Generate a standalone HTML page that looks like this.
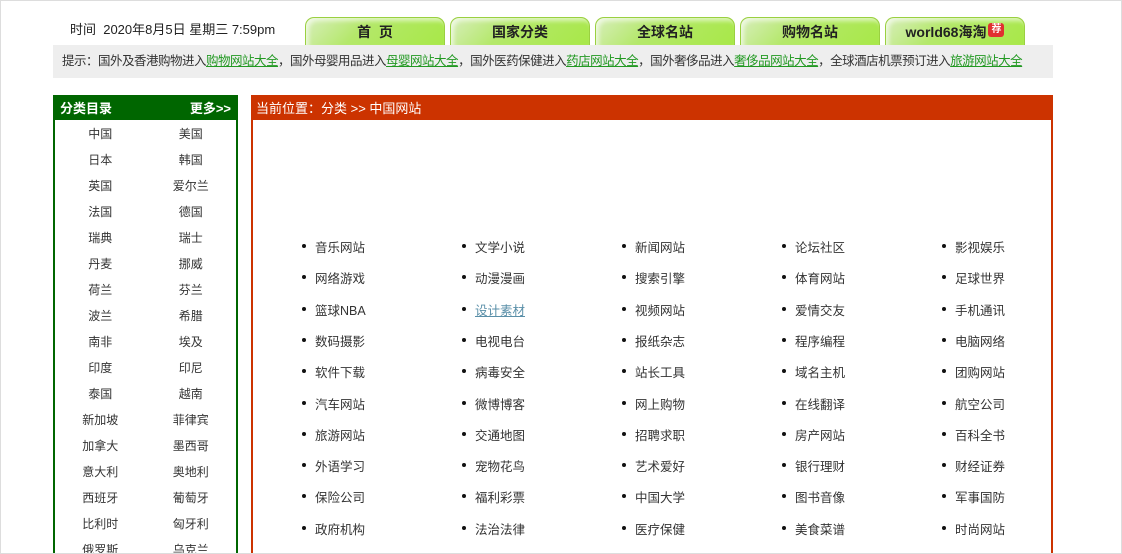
<!DOCTYPE html>
<html><head><meta charset="utf-8"><style>
*{margin:0;padding:0;box-sizing:border-box}
html,body{width:1122px;height:554px;overflow:hidden}
body{background:#fff;font-family:"Liberation Sans","Noto Sans CJK SC",sans-serif;font-size:12px;color:#333;position:relative}
.frame{position:absolute;left:0;top:0;width:1122px;height:554px;border:1px solid #ddd;pointer-events:none;z-index:5}
.abs{position:absolute}
.time{left:70px;top:19px;font-size:13px;color:#222}
.tab{top:17px;width:140px;height:28px;border-radius:9px 9px 0 0;background:linear-gradient(135deg,#d8eebc 0%,#b4e86a 40%,#a8e848 100%);border:1px solid #9ad040;border-bottom:none;text-align:center;line-height:29px;font-size:14px;font-weight:bold;color:#222;box-shadow:inset 3px 3px 4px rgba(255,255,255,.6)}
.tip{left:53px;top:45px;width:1000px;height:33px;background:#eee;line-height:33px;padding-left:9px;font-size:12.5px;color:#333;white-space:nowrap;overflow:hidden;letter-spacing:-0.5px}
.tip a{color:#229922;text-decoration:underline}
.lp{left:53px;top:95px;width:185px;height:470px;border:2px solid #006600}
.lh{height:23px;background:#006600;color:#fff;font-weight:bold;font-size:13px;line-height:23px;padding:0 5px}
.lh span{float:right}
.lp table{width:100%;border-collapse:collapse;margin-top:-1px}
.lp td{width:50%;text-align:center;height:26px;font-size:12px;color:#333}
.rp{left:251px;top:95px;width:802px;height:470px;border:2px solid #cc3300}
.rh{height:23px;background:#cc3300;color:#fff;font-size:13px;line-height:23px;padding-left:3px}
.it{position:absolute;font-size:12.5px;color:#333}
.it:before{content:"";position:absolute;left:-13px;top:7px;width:4px;height:4px;border-radius:50%;background:#111}
</style></head><body>
<div class="frame"></div>
<div class="abs time">时间&nbsp; 2020年8月5日 星期三 7:59pm</div>
<div class="abs tab" style="left:305px">首&nbsp;&nbsp;页</div>
<div class="abs tab" style="left:450px">国家分类</div>
<div class="abs tab" style="left:595px">全球名站</div>
<div class="abs tab" style="left:740px">购物名站</div>
<div class="abs tab" style="left:885px">world68海淘<span style="display:inline-block;background:#e03030;color:#fff;font-size:10px;line-height:14px;width:16px;border-radius:3px;vertical-align:5px;margin-left:2px">荐</span></div>
<div class="abs tip">提示：国外及香港购物进入<a>购物网站大全</a>，国外母婴用品进入<a>母婴网站大全</a>，国外医药保健进入<a>药店网站大全</a>，国外奢侈品进入<a>奢侈品网站大全</a>，全球酒店机票预订进入<a>旅游网站大全</a></div>
<div class="abs lp"><div class="lh">分类目录<span>更多&gt;&gt;</span></div>
<table>
<tr><td>中国</td><td>美国</td></tr><tr><td>日本</td><td>韩国</td></tr><tr><td>英国</td><td>爱尔兰</td></tr><tr><td>法国</td><td>德国</td></tr><tr><td>瑞典</td><td>瑞士</td></tr><tr><td>丹麦</td><td>挪威</td></tr><tr><td>荷兰</td><td>芬兰</td></tr><tr><td>波兰</td><td>希腊</td></tr><tr><td>南非</td><td>埃及</td></tr><tr><td>印度</td><td>印尼</td></tr><tr><td>泰国</td><td>越南</td></tr><tr><td>新加坡</td><td>菲律宾</td></tr><tr><td>加拿大</td><td>墨西哥</td></tr><tr><td>意大利</td><td>奥地利</td></tr><tr><td>西班牙</td><td>葡萄牙</td></tr><tr><td>比利时</td><td>匈牙利</td></tr><tr><td>俄罗斯</td><td>乌克兰</td></tr>
</table></div>
<div class="abs rp"><div class="rh">当前位置：分类 &gt;&gt; 中国网站</div></div>
<div id="list"></div>
<script>
var d=[["音乐网站","文学小说","新闻网站","论坛社区","影视娱乐"],["网络游戏","动漫漫画","搜索引擎","体育网站","足球世界"],["篮球NBA","设计素材","视频网站","爱情交友","手机通讯"],["数码摄影","电视电台","报纸杂志","程序编程","电脑网络"],["软件下载","病毒安全","站长工具","域名主机","团购网站"],["汽车网站","微博博客","网上购物","在线翻译","航空公司"],["旅游网站","交通地图","招聘求职","房产网站","百科全书"],["外语学习","宠物花鸟","艺术爱好","银行理财","财经证券"],["保险公司","福利彩票","中国大学","图书音像","军事国防"],["政府机构","法治法律","医疗保健","美食菜谱","时尚网站"]];
var h="";for(var r=0;r<10;r++)for(var c=0;c<5;c++){var s=(r==2&&c==1)?"color:#5a8fa8;text-decoration:underline;":"";h+='<div class="it" style="'+s+'left:'+(315+c*160)+'px;top:'+(237+r*31.3)+'px">'+d[r][c]+'</div>';}
document.getElementById("list").innerHTML=h;
</script>
</body></html>
